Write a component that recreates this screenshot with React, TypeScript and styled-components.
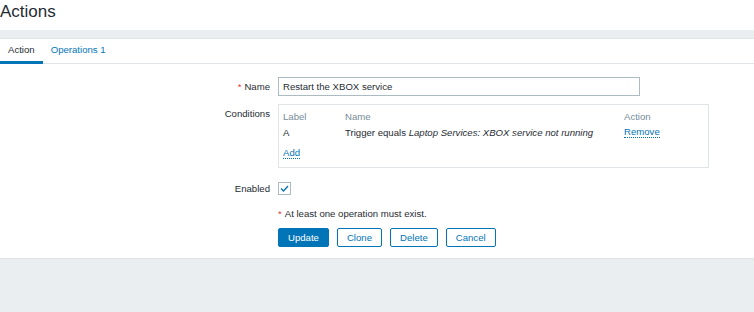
import React from "react";
import styled, { createGlobalStyle } from "styled-components";

const blue = "#0275b8";
const ink = "#1f2c33";
const muted = "#768d99";
const line = "#dfe4e7";

const GlobalStyle = createGlobalStyle`
  body {
    margin: 0;
    background: #ebeef0;
    font-family: "Liberation Sans", Arial, sans-serif;
    font-size: 9.6px;
    color: ${ink};
  }
`;

const Header = styled.header`
  background: #fff;
  height: 30px;
  box-sizing: border-box;
  padding-top: 2px;
  h1 {
    margin: 0;
    font-size: 17px;
    font-weight: normal;
    line-height: 20px;
    color: ${ink};
  }
`;

const Panel = styled.section`
  margin-top: 8px;
  background: #fff;
  border-top: 1px solid ${line};
  border-bottom: 1px solid ${line};
`;

const Tabs = styled.nav`
  display: flex;
  height: 25px;
  border-bottom: 1px solid ${line};
  box-sizing: border-box;
`;

const Tab = styled.a<{ $active?: boolean }>`
  display: block;
  padding: 0 8px;
  line-height: 22px;
  height: 25px;
  box-sizing: border-box;
  color: ${(p) => (p.$active ? ink : blue)};
  border-bottom: 3px solid ${(p) => (p.$active ? blue : "transparent")};
  text-decoration: none;
  cursor: pointer;
`;

const Form = styled.form`
  padding: 13px 0 11px;
`;

const Row = styled.div<{ $gap?: number }>`
  display: flex;
  margin-top: ${(p) => p.$gap ?? 0}px;
`;

const Label = styled.label`
  flex: 0 0 270px;
  padding-right: 8px;
  text-align: right;
  line-height: 19px;
  white-space: nowrap;
`;

const Star = styled.span`
  color: #e33734;
  margin-right: 3px;
`;

const TextInput = styled.input`
  width: 362px;
  height: 19px;
  box-sizing: border-box;
  border: 1px solid #acbbc2;
  padding: 0 4px;
  font: inherit;
  color: ${ink};
  outline: 0;
`;

const ConditionBox = styled.div`
  width: 431px;
  box-sizing: border-box;
  border: 1px solid ${line};
  padding: 3px 4px 6px;
`;

const CondGrid = styled.div`
  display: grid;
  grid-template-columns: 62px 279px 1fr;
  grid-auto-rows: 16px;
  align-items: center;
`;

const Th = styled.div`
  color: ${muted};
`;

const LinkText = styled.a`
  color: ${blue};
  text-decoration: none;
  border-bottom: 1px dotted ${blue};
  cursor: pointer;
  line-height: 11px;
  justify-self: start;
`;

const AddLine = styled.div`
  display: flex;
  align-items: center;
  height: 16px;
  margin-top: 5px;
`;

const CheckBox = styled.span`
  display: flex;
  align-items: center;
  justify-content: center;
  width: 13px;
  height: 13px;
  margin-top: 3px;
  box-sizing: border-box;
  border: 1px solid #acbbc2;
  background: #fff;
`;

const Note = styled.div`
  line-height: 19px;
`;

const Buttons = styled.div`
  display: flex;
  gap: 8px;
`;

const Button = styled.button<{ $primary?: boolean }>`
  height: 19px;
  padding: 0 9px;
  font: inherit;
  border-radius: 2px;
  border: 1px solid ${blue};
  background: ${(p) => (p.$primary ? blue : "#fff")};
  color: ${(p) => (p.$primary ? "#fff" : blue)};
  cursor: pointer;
`;

export default function App() {
  return (
    <>
      <GlobalStyle />
      <Header>
        <h1>Actions</h1>
      </Header>
      <Panel>
        <Tabs>
          <Tab $active>Action</Tab>
          <Tab>Operations 1</Tab>
        </Tabs>
        <Form onSubmit={(e) => e.preventDefault()}>
          <Row>
            <Label>
              <Star>*</Star>Name
            </Label>
            <TextInput defaultValue="Restart the XBOX service" />
          </Row>
          <Row $gap={8}>
            <Label>Conditions</Label>
            <ConditionBox>
              <CondGrid>
                <Th>Label</Th>
                <Th>Name</Th>
                <Th>Action</Th>
                <div>A</div>
                <div>
                  Trigger equals <i>Laptop Services: XBOX service not running</i>
                </div>
                <LinkText>Remove</LinkText>
              </CondGrid>
              <AddLine>
                <LinkText>Add</LinkText>
              </AddLine>
            </ConditionBox>
          </Row>
          <Row $gap={11}>
            <Label>Enabled</Label>
            <CheckBox>
              <svg width="9" height="7" viewBox="0 0 9 7">
                <polyline
                  points="1,3.5 3.5,6 8,1"
                  fill="none"
                  stroke={blue}
                  strokeWidth="1.3"
                />
              </svg>
            </CheckBox>
          </Row>
          <Row $gap={6}>
            <Label />
            <Note>
              <Star>*</Star>At least one operation must exist.
            </Note>
          </Row>
          <Row $gap={5}>
            <Label />
            <Buttons>
              <Button $primary>Update</Button>
              <Button>Clone</Button>
              <Button>Delete</Button>
              <Button>Cancel</Button>
            </Buttons>
          </Row>
        </Form>
      </Panel>
    </>
  );
}
